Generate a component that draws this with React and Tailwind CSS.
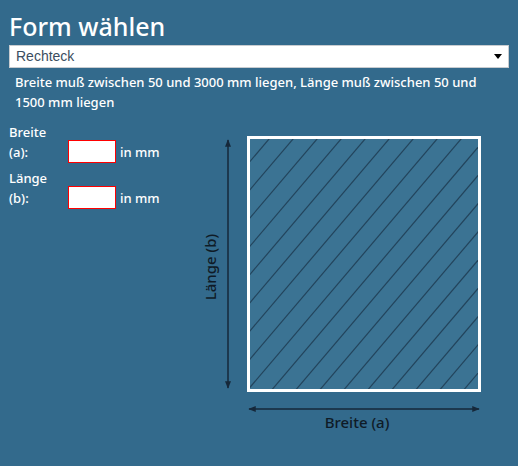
import React from "react";

const font = { fontFamily: '"Noto Sans", "Open Sans", sans-serif' };

// bottom crossings of the hatch lines (svg units)
const hatch = Array.from({ length: 22 }, (_, i) => 76.7 + 24 * (i - 10));

const Diagram = () => (
  <svg width="300" height="310" viewBox="0 0 300 310" className="block">
    <defs>
      <clipPath id="inner">
        <rect x="55" y="10" width="228" height="250" />
      </clipPath>
      <marker id="ah" viewBox="0 0 10 10" refX="9" refY="5" markerWidth="5" markerHeight="5" orient="auto-start-reverse">
        <path d="M0 1 L10 5 L0 9 z" fill="#16283a" />
      </marker>
    </defs>
    <rect x="53.5" y="8.5" width="231" height="253" fill="#3b7393" />
    <g clipPath="url(#inner)" stroke="#23445c" strokeWidth="1.2">
      {hatch.map((xb) => (
        <line key={xb} x1={xb + 0.85 * 262} y1={-1} x2={xb} y2={261} />
      ))}
    </g>
    <rect x="53.5" y="8.5" width="231" height="253" fill="none" stroke="#fff" strokeWidth="3" />
    <line x1="33" y1="11" x2="33" y2="259" stroke="#16283a" strokeWidth="1.5" markerStart="url(#ah)" markerEnd="url(#ah)" />
    <line x1="54" y1="280" x2="284" y2="280" stroke="#16283a" strokeWidth="1.5" markerStart="url(#ah)" markerEnd="url(#ah)" />
    <text x="162" y="299" textAnchor="middle" fontSize="15" fontWeight="500" fill="#0f1b27" style={font}>
      Breite (a)
    </text>
    <text x="21" y="138" textAnchor="middle" fontSize="15" fontWeight="500" fill="#0f1b27" transform="rotate(-90 21 138)" style={font}>
      Länge (b)
    </text>
  </svg>
);

const Field = ({ label, sym }) => (
  <div className="flex items-end">
    <div className="w-[59px] text-[13px] leading-[20px] font-medium text-white">
      <div>{label}</div>
      <div>{sym}</div>
    </div>
    <div className="w-[48px] h-[23px] bg-white border-[1.5px] border-solid border-[#ff0000] mb-[-1px]" />
    <span className="ml-[4px] text-[13px] leading-[20px] font-medium text-white">in mm</span>
  </div>
);

export default function App() {
  return (
    <div className="min-h-screen w-full bg-[#336a8c]" style={font}>
      <div className="px-[9px] pt-[8px]">
        <h1 className="text-[25px] leading-[36px] font-medium text-white">Form wählen</h1>
        <div className="mt-[1px] h-[23px] bg-white border border-solid border-[#c8ccd0] flex items-center justify-between pl-[6px] pr-[6px]">
          <span className="text-[14px] text-[#3b4d60]" style={{ fontFamily: '"Liberation Sans", Arial, sans-serif' }}>
            Rechteck
          </span>
          <span className="w-0 h-0 border-l-[4px] border-r-[4px] border-t-[5px] border-solid border-l-transparent border-r-transparent border-t-black" />
        </div>
        <p className="mt-[4px] px-[6px] text-[13px] leading-[20px] font-medium text-white">
          Breite muß zwischen 50 und 3000 mm liegen, Länge muß zwischen 50 und 1500 mm liegen
        </p>
        <div className="flex mt-[10px]">
          <div className="flex flex-col gap-[6px] w-[186px]">
            <Field label="Breite" sym="(a):" />
            <Field label="Länge" sym="(b):" />
          </div>
          <div className="mt-[7px]">
            <Diagram />
          </div>
        </div>
      </div>
    </div>
  );
}
